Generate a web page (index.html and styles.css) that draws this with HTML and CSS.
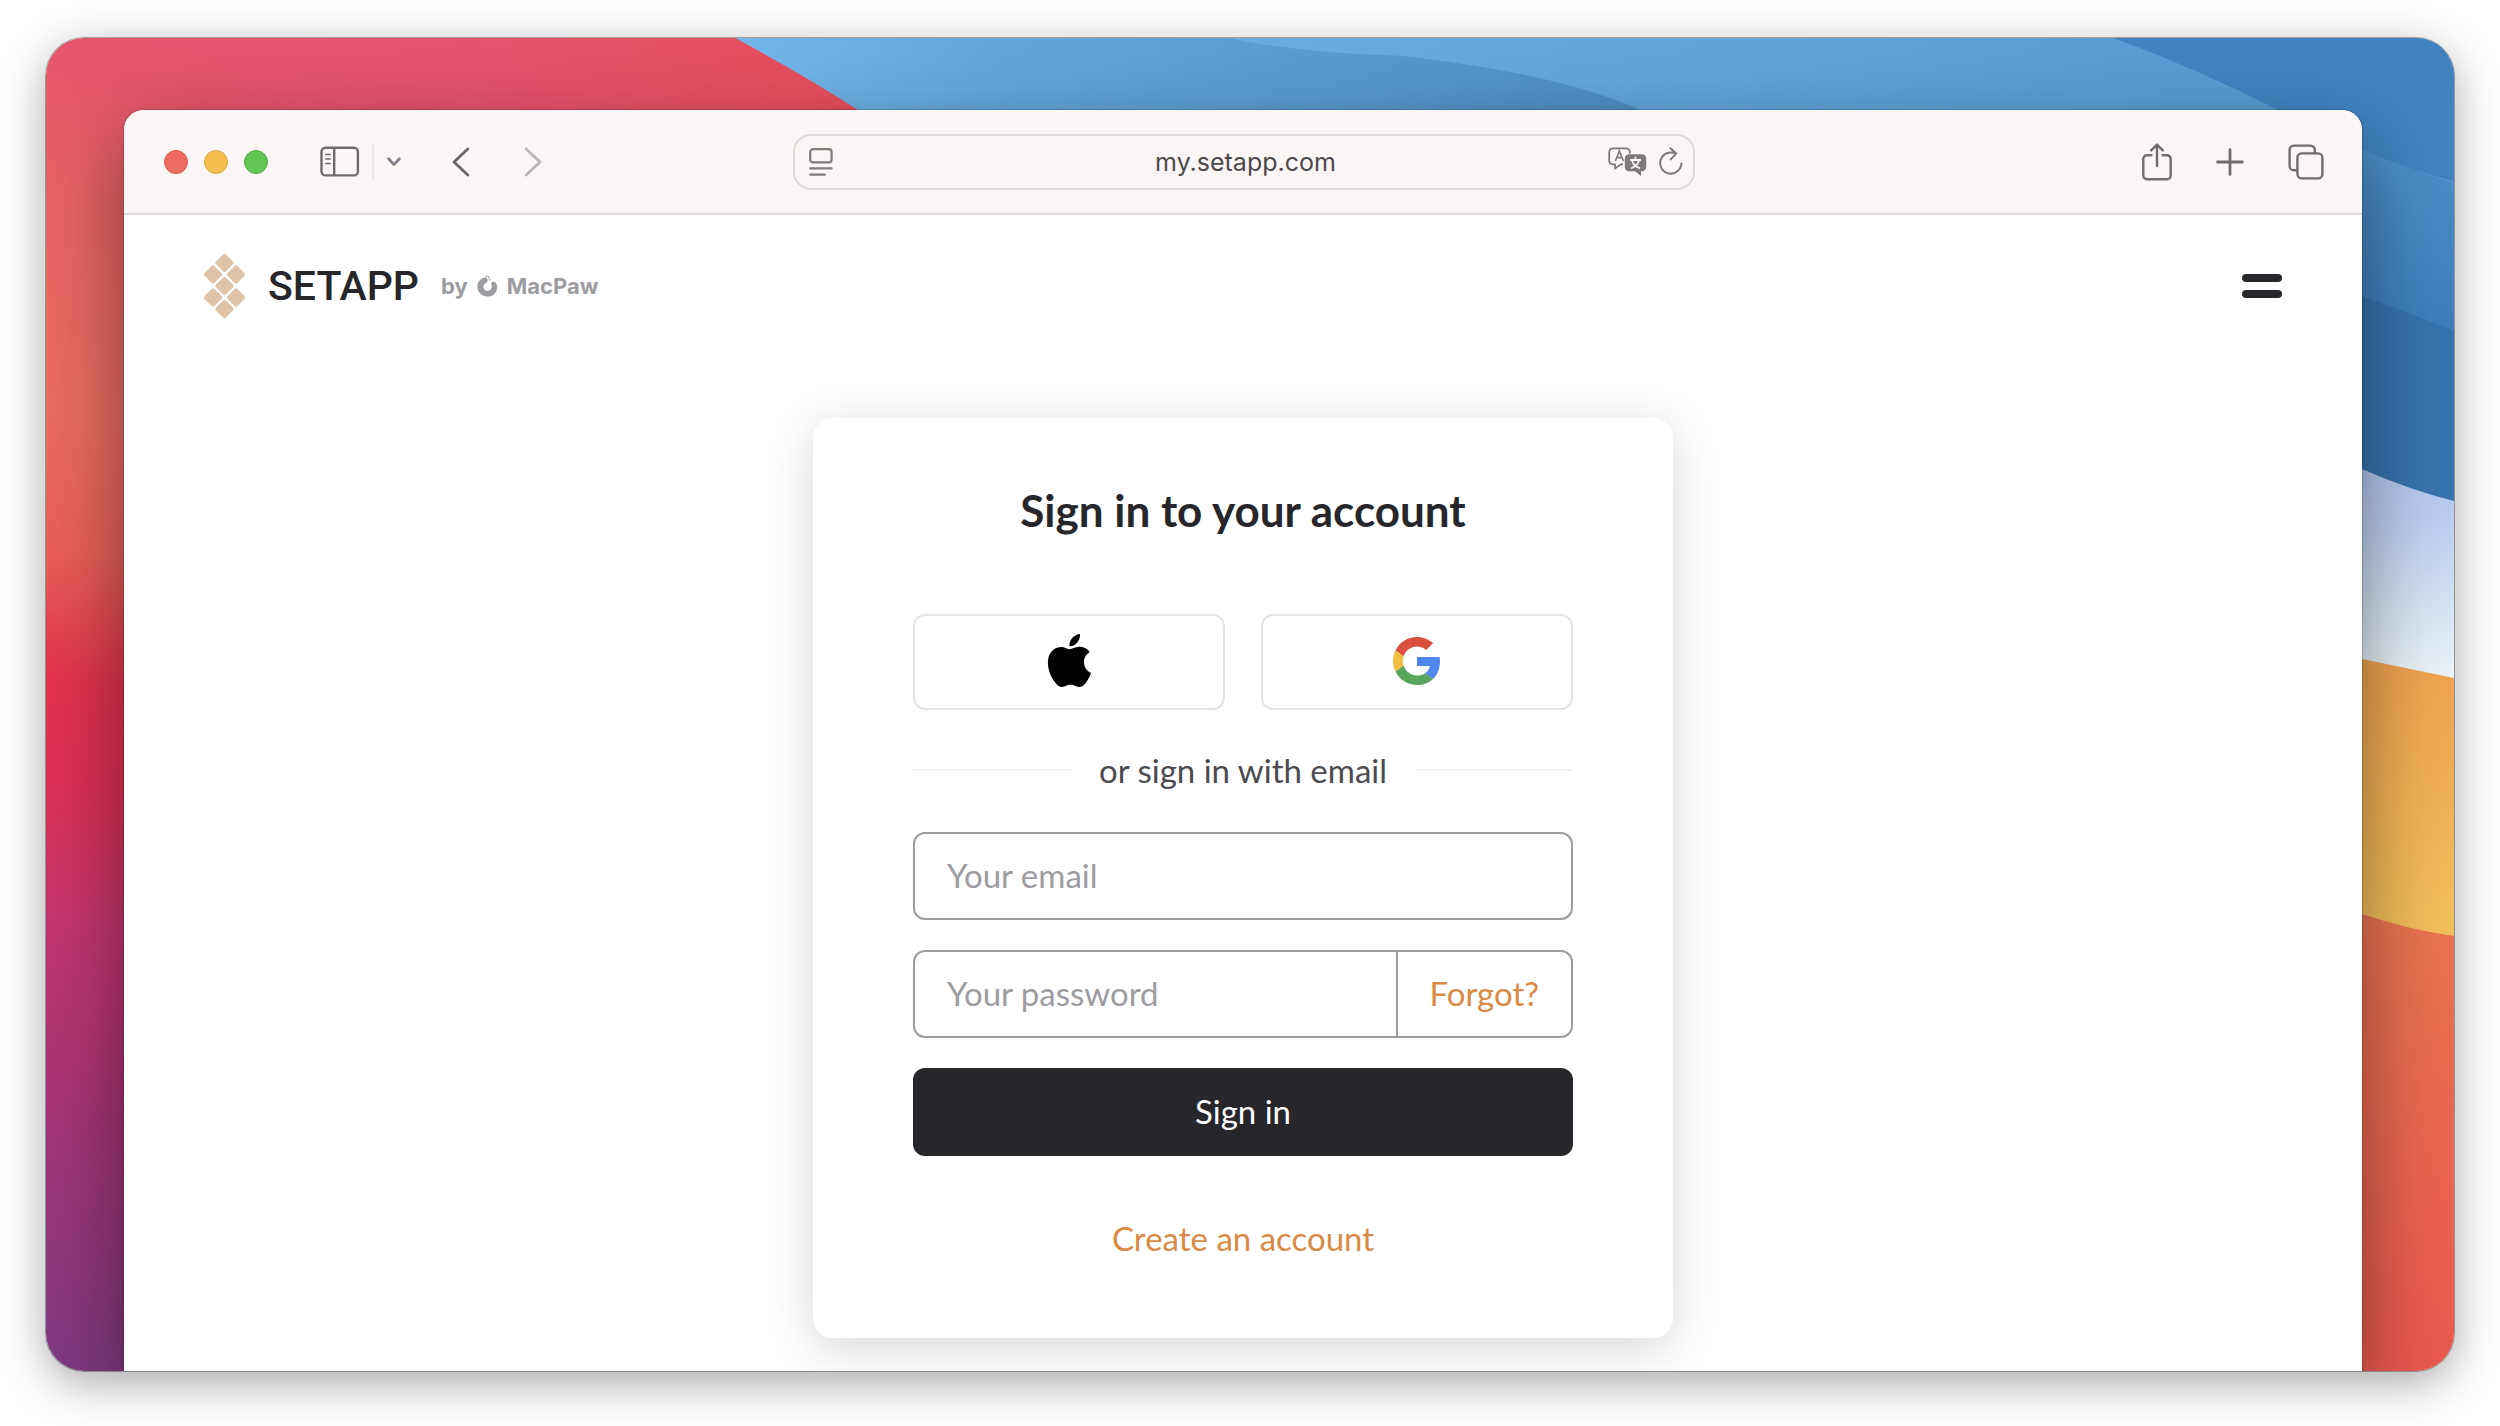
FILE: index.html
```html
<!DOCTYPE html>
<html lang="en">
<head>
<meta charset="utf-8">
<meta name="viewport" content="width=device-width, initial-scale=1">
<title>Setapp</title>
<link rel="stylesheet" href="styles.css">
</head>
<body>
<div class="desktop">
  <svg class="wallpaper" viewBox="46 38 2408 1333" preserveAspectRatio="none" aria-hidden="true">
    <defs>
      <linearGradient id="left" gradientUnits="userSpaceOnUse" x1="300" y1="0" x2="40" y2="1371">
        <stop offset="0" stop-color="#e2546f"/>
        <stop offset=".08" stop-color="#e4566a"/>
        <stop offset=".18" stop-color="#e86465"/>
        <stop offset=".32" stop-color="#eb6c60"/>
        <stop offset=".42" stop-color="#e96058"/>
        <stop offset=".51" stop-color="#e2324d"/>
        <stop offset=".58" stop-color="#de3055"/>
        <stop offset=".68" stop-color="#c5366f"/>
        <stop offset=".81" stop-color="#a63477"/>
        <stop offset="1" stop-color="#7f3a80"/>
      </linearGradient>
      <linearGradient id="rose" x1="0" y1="0" x2="1" y2="0">
        <stop offset="0" stop-color="#e3526f" stop-opacity="0"/>
        <stop offset=".4" stop-color="#e4536d"/>
        <stop offset="1" stop-color="#e64c58"/>
      </linearGradient>
      <linearGradient id="sky" gradientUnits="userSpaceOnUse" x1="735" y1="0" x2="1640" y2="0">
        <stop offset="0" stop-color="#73b6e8"/>
        <stop offset=".3" stop-color="#63a5db"/>
        <stop offset="1" stop-color="#4f8dc5"/>
      </linearGradient>
      <linearGradient id="wave" gradientUnits="userSpaceOnUse" x1="1230" y1="0" x2="2200" y2="0">
        <stop offset="0" stop-color="#6aabe3"/>
        <stop offset="1" stop-color="#589bd2"/>
      </linearGradient>
      <linearGradient id="band" gradientUnits="userSpaceOnUse" x1="0" y1="150" x2="0" y2="340">
        <stop offset="0" stop-color="#4d8fc8"/>
        <stop offset="1" stop-color="#3c7dba"/>
      </linearGradient>
      <linearGradient id="mist" gradientUnits="userSpaceOnUse" x1="0" y1="470" x2="0" y2="678">
        <stop offset="0" stop-color="#b3c6ee"/>
        <stop offset=".3" stop-color="#bdd0f0"/>
        <stop offset="1" stop-color="#edf4f7"/>
      </linearGradient>
      <linearGradient id="sand" gradientUnits="userSpaceOnUse" x1="0" y1="660" x2="0" y2="935">
        <stop offset="0" stop-color="#efa250"/>
        <stop offset="1" stop-color="#f1bf5a"/>
      </linearGradient>
      <linearGradient id="coral" gradientUnits="userSpaceOnUse" x1="0" y1="915" x2="0" y2="1371">
        <stop offset="0" stop-color="#e97451"/>
        <stop offset="1" stop-color="#ea584e"/>
      </linearGradient>
    </defs>
    <rect x="46" y="38" width="1200" height="1333" fill="url(#left)"/>
    <rect x="180" y="38" width="720" height="80" fill="url(#rose)"/>
    <path d="M735 38Q802 74 858 110L900 140H2454V38Z" fill="url(#sky)"/>
    <path d="M1228 38Q1300 53 1403 56Q1560 74 1640 110V140H2454V38Z" fill="url(#wave)"/>
    <path d="M2114 38Q2200 70 2278 110Q2370 160 2454 182V38Z" fill="#4183c1"/>
    <path d="M2278 110Q2370 158 2454 182V520H2240V110Z" fill="url(#band)"/>
    <path d="M2300 272L2362 296Q2410 313 2454 331V520H2300Z" fill="#3773ae"/>
    <path d="M2300 456L2362 469Q2410 490 2454 501V720H2300Z" fill="url(#mist)"/>
    <path d="M2300 650L2362 659L2454 678V960H2300Z" fill="url(#sand)"/>
    <path d="M2300 900L2362 914Q2410 930 2454 936V1371H2300Z" fill="url(#coral)"/>
  </svg>

  <div class="window">
    <div class="toolbar">
      <div class="tools">
        <div class="lights"><span class="light red"></span><span class="light yellow"></span><span class="light green"></span></div>
        <button class="tool" aria-label="Sidebar">
          <svg width="40" height="32" viewBox="0 0 40 32" fill="none" stroke="#6f6b6a" stroke-width="2.4" stroke-linecap="round"><rect x="1.5" y="1.8" width="36.4" height="27.6" rx="4"/><path d="M14.2 2V29"/><path d="M6 8.5H10M6 13H10M6 17.5H10" stroke-width="1.7"/></svg>
        </button>
        <span class="rule"></span>
        <button class="tool menu" aria-label="Tab groups">
          <svg width="14" height="10" viewBox="0 0 14 10" fill="none" stroke="#85818a" stroke-width="2.8" stroke-linecap="round" stroke-linejoin="round"><path d="M1.6 1.8L7 7.6L12.4 1.8"/></svg>
        </button>
        <button class="tool back" aria-label="Back">
          <svg width="18" height="30" viewBox="0 0 18 30" fill="none" stroke="#6b6766" stroke-width="2.8" stroke-linecap="round" stroke-linejoin="round"><path d="M15.8 2L2 15L15.8 28"/></svg>
        </button>
        <button class="tool forward" aria-label="Forward">
          <svg width="18" height="30" viewBox="0 0 18 30" fill="none" stroke="#bab7b6" stroke-width="2.8" stroke-linecap="round" stroke-linejoin="round"><path d="M2.2 2L16 15L2.2 28"/></svg>
        </button>
      </div>

      <div class="address">
        <button class="tool" aria-label="Page menu">
          <svg width="24" height="28" viewBox="0 0 24 28" fill="none" stroke="#7f7b7a" stroke-width="2.2" stroke-linecap="round"><rect x="1.2" y="1.2" width="21.4" height="13.2" rx="3"/><path d="M1.2 20.4H22.6M1.2 26.6H16"/></svg>
        </button>
        <input class="url" type="text" aria-label="Address" value="my.setapp.com">
        <button class="tool" aria-label="Translate">
          <svg width="39" height="30" viewBox="0 0 39 30" fill="none"><path d="M5 1.3H18a3.8 3.8 0 0 1 3.8 3.8V6.4M15 17.4H12.6L7 21.6V17.4H5A3.8 3.8 0 0 1 1.2 13.6V5.1A3.8 3.8 0 0 1 5 1.3" stroke="#7c7978" stroke-width="1.8" stroke-linejoin="round"/><path d="M7.4 14L11.4 4L15.4 14M8.8 10.6H14" stroke="#7c7978" stroke-width="1.6"/><path d="M21 7.2H34a4.2 4.2 0 0 1 4.2 4.2V20a4.2 4.2 0 0 1-4.2 4.2H33V29L27 24.2H21A4.2 4.2 0 0 1 16.8 20V11.4A4.2 4.2 0 0 1 21 7.2Z" fill="#7c7978"/><path d="M22 13H33M27.5 9.8V13M24 13.6C25 17 28 20 32 21.4M31 13.6C30 17 27 20 23 21.4" stroke="#faf6f5" stroke-width="1.8"/></svg>
        </button>
        <button class="tool" aria-label="Reload">
          <svg width="24" height="29" viewBox="0 0 24 29" fill="none" stroke="#7f7b7a" stroke-width="2" stroke-linecap="round" stroke-linejoin="round"><path d="M22.4 16.4A10.6 10.6 0 1 1 16.6 6.6M11.4 1.2L17.2 6.6L11.8 12.4"/></svg>
        </button>
      </div>

      <div class="tools actions">
        <button class="tool" aria-label="Share">
          <svg width="30" height="38" viewBox="0 0 30 38" fill="none" stroke="#716d6c" stroke-width="2.4" stroke-linecap="round" stroke-linejoin="round"><path d="M9.4 12.2H5a3.7 3.7 0 0 0-3.7 3.7V32.6A3.7 3.7 0 0 0 5 36.3H25a3.7 3.7 0 0 0 3.7-3.7V15.9A3.7 3.7 0 0 0 25 12.2H20.6"/><path d="M15 23V2M9.2 7.4L15 1.6L20.8 7.4"/></svg>
        </button>
        <button class="tool" aria-label="New tab">
          <svg width="28" height="28" viewBox="0 0 28 28" fill="none" stroke="#716d6c" stroke-width="2.8" stroke-linecap="round"><path d="M14 1.6V26.4M1.6 14H26.4"/></svg>
        </button>
        <button class="tool" aria-label="All tabs">
          <svg width="36" height="36" viewBox="0 0 36 36" fill="none" stroke="#716d6c" stroke-width="2.4"><rect x="9.4" y="9.4" width="25" height="25" rx="4.4"/><path d="M9 26.3H6A4.4 4.4 0 0 1 1.6 21.9V6A4.4 4.4 0 0 1 6 1.6H22.4A4.4 4.4 0 0 1 26.8 6V9"/></svg>
        </button>
      </div>
    </div>

    <header class="site-header">
      <a class="brand" href="#">
        <svg width="42" height="64" viewBox="0 0 42 64" fill="#dfc3a9">
          <g transform="translate(20.5 8.9) rotate(45)"><rect x="-7" y="-7" width="14" height="14" rx="2"/></g>
          <g transform="translate(9 20.4) rotate(45)"><rect x="-7" y="-7" width="14" height="14" rx="2"/></g>
          <g transform="translate(32 20.4) rotate(45)"><rect x="-7" y="-7" width="14" height="14" rx="2"/></g>
          <g transform="translate(20.5 32) rotate(45)"><rect x="-7" y="-7" width="14" height="14" rx="2"/></g>
          <g transform="translate(9 43.5) rotate(45)"><rect x="-7" y="-7" width="14" height="14" rx="2"/></g>
          <g transform="translate(32 43.5) rotate(45)"><rect x="-7" y="-7" width="14" height="14" rx="2"/></g>
          <g transform="translate(20.5 55) rotate(45)"><rect x="-7" y="-7" width="14" height="14" rx="2"/></g>
        </svg>
        <span class="wordmark">SETAPP</span>
        <span class="maker">by
          <svg width="21" height="22" viewBox="0 0 21 22" fill="#9c9ca1"><path d="M7.6 2.4C3 3.6.4 7 .4 11.6C.4 17.2 4.8 21.6 10.4 21.6S20.2 17.4 20.2 12.2C20.2 10.2 19.4 8.2 18.2 7.2C17 6.2 15 6.6 14.4 8C14 9.2 14.8 10.2 14.8 11.8C14.8 14.2 12.8 15.9 10.6 15.9C8.2 15.9 6.4 14.2 6.4 11.8C6.4 9.6 7.8 8.4 9.6 7.4C11.2 6.4 11 4.4 9.8 3.2C9.2 2.6 8.4 2.2 7.6 2.4Z"/><circle cx="9.6" cy="1.2" r=".9"/><circle cx="11.8" cy="2.2" r=".9"/><circle cx="12.6" cy="4.6" r=".9"/></svg>
          MacPaw</span>
      </a>
      <button class="burger" aria-label="Menu"><span></span><span></span></button>
    </header>

    <main class="page">
      <form class="card">
        <h1>Sign in to your account</h1>
        <div class="social">
          <button type="button" aria-label="Apple">
            <svg width="53" height="53" viewBox="0 0 24 24"><path d="M12.152 6.896c-.948 0-2.415-1.078-3.96-1.04-2.04.027-3.91 1.183-4.961 3.014-2.117 3.675-.546 9.103 1.519 12.09 1.013 1.454 2.208 3.09 3.792 3.039 1.52-.065 2.09-.987 3.935-.987 1.831 0 2.35.987 3.96.948 1.637-.026 2.676-1.48 3.676-2.948 1.156-1.688 1.636-3.325 1.662-3.415-.039-.013-3.182-1.221-3.22-4.857-.026-3.04 2.48-4.494 2.597-4.559-1.429-2.09-3.623-2.324-4.39-2.376-2-.156-3.675 1.09-4.61 1.09zM15.53 3.83c.843-1.012 1.4-2.427 1.245-3.83-1.207.052-2.662.805-3.532 1.818-.78.896-1.454 2.338-1.273 3.714 1.338.104 2.715-.688 3.559-1.701"/></svg>
          </button>
          <button type="button" aria-label="Google">
            <svg width="48" height="48" viewBox="0 0 48 48"><path fill="#d9503f" d="M24 9.5c3.54 0 6.71 1.22 9.21 3.6l6.85-6.85C35.9 2.38 30.47 0 24 0 14.62 0 6.51 5.38 2.56 13.22l7.98 6.19C12.43 13.72 17.74 9.5 24 9.5z"/><path fill="#5086ee" d="M46.98 24.55c0-1.57-.15-3.09-.38-4.55H24v9.02h12.94c-.58 2.96-2.26 5.48-4.78 7.18l7.73 6c4.51-4.18 7.09-10.36 7.09-17.65z"/><path fill="#f1bf42" d="M10.53 28.59c-.48-1.45-.76-2.99-.76-4.59s.27-3.14.76-4.59l-7.98-6.19C.92 16.46 0 20.12 0 24c0 3.88.92 7.54 2.56 10.78l7.97-6.19z"/><path fill="#58a55b" d="M24 48c6.48 0 11.93-2.13 15.89-5.81l-7.73-6c-2.15 1.45-4.92 2.3-8.16 2.3-6.26 0-11.57-4.22-13.47-9.91l-7.98 6.19C6.51 42.62 14.62 48 24 48z"/></svg>
          </button>
        </div>
        <p class="or">or sign in with email</p>
        <input class="field" type="email" placeholder="Your email" aria-label="Your email">
        <div class="field password">
          <input type="password" placeholder="Your password" aria-label="Your password">
          <a href="#">Forgot?</a>
        </div>
        <button class="submit" type="submit">Sign in</button>
        <a class="create" href="#">Create an account</a>
      </form>
    </main>
  </div>
</div>
</body>
</html>
```
FILE: styles.css
```css
* {
  box-sizing: border-box;
}

body {
  margin: 0;
  min-height: 100vh;
  padding: 38px 46px 55px;
  display: flex;
  background: #fff;
  color: #26262b;
  font-family: Lato, "Open Sans", sans-serif;
  font-size: 33px;
}

button {
  padding: 0;
  border: 0;
  background: none;
  font: inherit;
  color: inherit;
}

a {
  color: #d98a44;
  text-decoration: none;
}

svg {
  display: block;
}

.desktop {
  position: relative;
  flex: 1;
  min-width: 0;
  padding: 72px 92px 0 78px;
  display: flex;
  overflow: hidden;
  border-radius: 38px;
  box-shadow: 0 0 0 1px rgba(0, 0, 0, .3), 0 12px 46px rgba(0, 0, 0, .34);
}

.wallpaper {
  position: absolute;
  inset: 0;
  width: 100%;
  height: 100%;
}

.window {
  position: relative;
  flex: 1;
  min-width: 0;
  border-radius: 20px 20px 0 0;
  background: #fff;
  box-shadow: 0 0 2px rgba(0, 0, 0, .5), 0 32px 80px rgba(0, 0, 0, .45);
}

/* Browser toolbar */
.toolbar {
  display: grid;
  grid-template-columns: 1fr minmax(0, 902px) 1fr;
  align-items: center;
  height: 105px;
  padding: 0 38px 0 40px;
  border-bottom: 2px solid #dcdada;
  border-radius: 20px 20px 0 0;
  background: #faf6f5;
}

.tools {
  display: flex;
  align-items: center;
}

.lights {
  display: flex;
  gap: 16px;
  margin-right: 52px;
}

.light {
  width: 24px;
  height: 24px;
  border: 1px solid;
  border-radius: 50%;
}

.red {
  background: #ed6b5f;
  border-color: #d9564a;
}

.yellow {
  background: #f5bf4f;
  border-color: #dba53c;
}

.green {
  background: #62c655;
  border-color: #4fae42;
}

.rule {
  width: 2px;
  height: 36px;
  margin: 0 13px 0 12px;
  background: #ece8e7;
}

.back {
  margin-left: 51px;
}

.forward {
  margin-left: 54px;
}

.actions {
  justify-content: flex-end;
  gap: 44px;
}

.address {
  display: flex;
  align-items: center;
  gap: 12px;
  height: 56px;
  padding: 0 10px 0 14px;
  border: 2px solid #dedad9;
  border-radius: 18px;
}

.url {
  flex: 1;
  min-width: 0;
  padding: 0 0 0 50px;
  border: 0;
  background: none;
  color: #4c494a;
  font: 25px Inter, Roboto, sans-serif;
  text-align: center;
}

/* Site header */
.site-header {
  display: flex;
  align-items: center;
  justify-content: space-between;
  height: 142px;
  padding: 0 80px;
}

.brand {
  display: flex;
  align-items: center;
  gap: 22px;
  color: #26262b;
}

.wordmark {
  font: 500 41px Roboto, sans-serif;
}

.maker {
  display: flex;
  align-items: center;
  gap: 9px;
  color: #9c9ca1;
  font: 700 22px Inter, sans-serif;
}

.burger {
  display: grid;
  gap: 8px;
  width: 40px;
}

.burger span {
  height: 8px;
  border-radius: 4px;
  background: #26262b;
}

/* Sign-in card */
.page {
  display: flex;
  justify-content: center;
  padding: 61px 20px 30px;
}

.card {
  display: flex;
  flex-direction: column;
  width: 860px;
  padding: 62px 100px 80px;
  border-radius: 20px;
  background: #fff;
  box-shadow: 0 10px 50px rgba(0, 0, 0, .16);
}

.card h1 {
  margin: 0 0 74px;
  font-size: 44px;
  line-height: 60px;
  font-weight: 700;
  text-align: center;
}

.social {
  display: grid;
  grid-template-columns: 1fr 1fr;
  gap: 36px;
}

.social button {
  display: grid;
  place-items: center;
  height: 96px;
  padding-bottom: 3px;
  border: 2px solid #e4e4e5;
  border-radius: 12px;
}

.or {
  display: flex;
  align-items: center;
  gap: 28px;
  margin: 40px 0 42px;
  line-height: 40px;
  color: #4c4c50;
}

.or::before,
.or::after {
  content: "";
  flex: 1;
  height: 2px;
  background: #f1f1f2;
}

.field {
  width: 100%;
  height: 88px;
  margin: 0 0 30px;
  padding: 0 32px 3px;
  border: 2px solid #9c9ca1;
  border-radius: 12px;
  background: #fff;
  font: inherit;
}

.password {
  display: flex;
  padding: 0;
}

.password input {
  flex: 1;
  min-width: 0;
  padding: 0 32px 3px;
  border: 0;
  background: none;
  font: inherit;
}

.password a {
  display: flex;
  align-items: center;
  padding: 0 32px 3px;
  border-left: 2px solid #9c9ca1;
}

input::placeholder {
  color: #9c9ca1;
  opacity: 1;
}

.submit {
  height: 88px;
  margin-bottom: 62px;
  padding-bottom: 3px;
  border-radius: 12px;
  background: #26262b;
  color: #fff;
}

.create {
  align-self: center;
  line-height: 40px;
}
```
